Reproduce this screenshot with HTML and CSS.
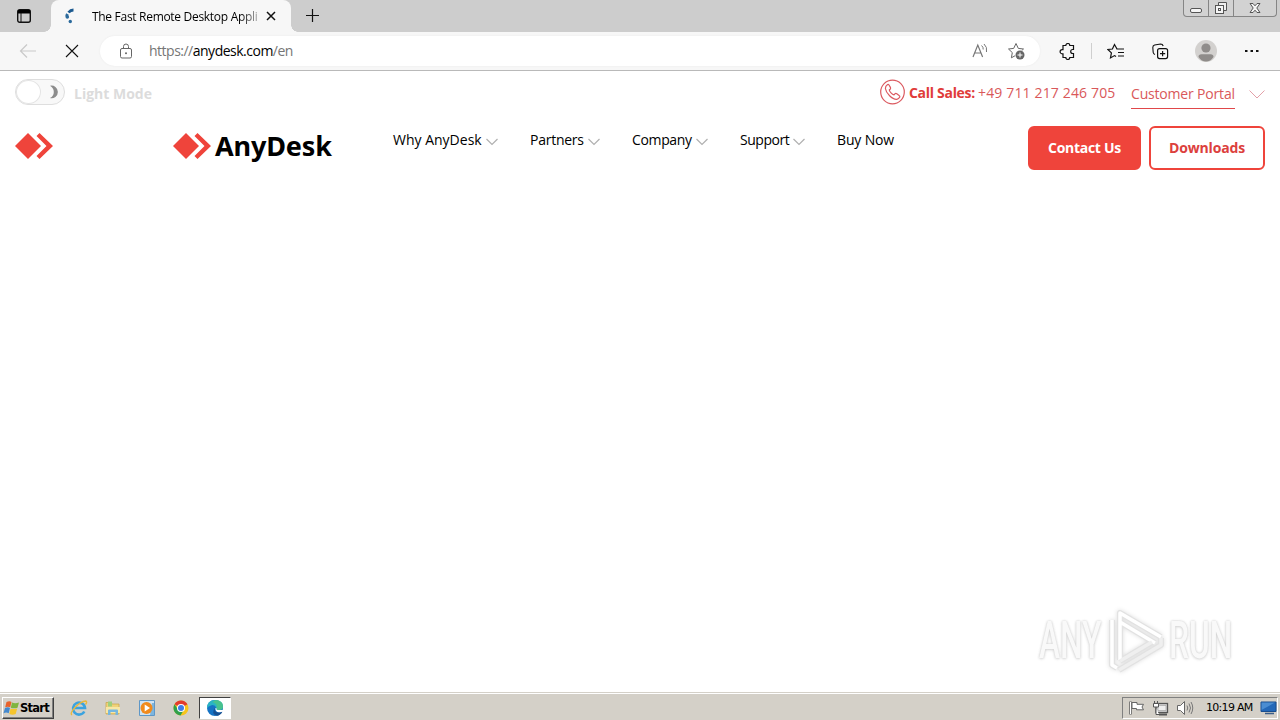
FILE: index.html
```
<!DOCTYPE html>
<html lang="en">
<head>
   <meta charset="UTF-8">
   <meta name="viewport" content="width=device-width, initial-scale=1.0">
   <title>The Fast Remote Desktop Application</title>
   <link rel="stylesheet" href="styles.css">
</head>
<body>

   <!-- shared shapes -->
   <svg class="defs" width="0" height="0">
      <symbol id="mark" viewBox="0 0 38 26">
         <path d="M0 13 13 0 26 13 13 26z"/>
         <path d="M21.500 3 24.500 0 38 13 24.500 26 21.500 23 31.500 13z"/>
      </symbol>
      <symbol id="chevron" viewBox="0 0 12 8">
         <path d="M.5 1 6 6.500 11.500 1" fill="none" stroke="currentColor" stroke-width="1.200"/>
      </symbol>
   </svg>

   <div class="tabstrip">
      <svg class="tab-menu" width="16" height="16" viewBox="0 0 16 16"><rect x="1.700" y="1.700" width="12.600" height="12.600" rx="2" fill="none" stroke="#111" stroke-width="1.400"/><path d="M2 2h12v3.500H2z"/><path d="M5 5v9" stroke="#111"/></svg>
      <div class="tab">
         <svg width="16" height="16" viewBox="0 0 16 16"><path d="M2.800 8.500Q2.800 7 3.500 6" fill="none" stroke="#2b6a9c" stroke-width="3"/><path d="M4.500 4.500Q6.500 2 9.500 2" fill="none" stroke="#1c5a90" stroke-width="2.800"/><circle cx="3.300" cy="9" r="1.800" fill="#2b6a9c"/><circle cx="6.300" cy="13.500" r="1.700" fill="#2b6a9c"/></svg>
         <span class="tab-title">The Fast Remote Desktop Appli</span>
         <svg class="tab-close" width="10" height="10" viewBox="0 0 10 10"><path d="M1 1l8 8M9 1 1 9" stroke="#111" stroke-width="1.500"/></svg>
      </div>
      <svg class="tab-new" width="15" height="15" viewBox="0 0 15 15"><path d="M7.500 1v13M1 7.500h13" stroke="#111" stroke-width="1.200"/></svg>
      <div class="window-buttons">
         <span><svg width="14" height="14" viewBox="0 0 14 14"><rect x="1.500" y="7.500" width="11" height="4" rx="1.500" fill="#f5f5f5" stroke="#555"/></svg></span>
         <span><svg width="14" height="14" viewBox="0 0 14 14"><path d="M4.500 1.500h8v8h-8z" fill="#eee" stroke="#555"/><rect x="1.500" y="4.500" width="8" height="8" fill="#f5f5f5" stroke="#555"/><rect x="4.500" y="7.500" width="2" height="2" fill="none" stroke="#555"/></svg></span>
         <span class="wide"><svg width="14" height="14" viewBox="0 0 14 14"><path d="M2 2.500h3l2 2.300 2-2.300h3L8.800 7l3.200 4.500H9L7 9.200l-2 2.300H2L5.200 7z" fill="#f5f5f5" stroke="#555"/></svg></span>
      </div>
   </div>

   <div class="toolbar">
      <svg class="back" width="18" height="16" viewBox="0 0 18 16"><path d="M8 1.500 1.500 8 8 14.500M1.500 8H17" fill="none" stroke="#c9c9c9" stroke-width="1.200"/></svg>
      <svg class="stop" width="14" height="14" viewBox="0 0 14 14"><path d="M1 1l12 12M13 1 1 13" stroke="#111" stroke-width="1.100"/></svg>
      <div class="address">
         <svg width="14" height="16" viewBox="0 0 14 16"><rect x="1.500" y="5.500" width="11" height="9.500" rx="1.500" fill="none" stroke="#666"/><path d="M4.500 5.500V3.500a2.500 2.500 0 0 1 5 0v2" fill="none" stroke="#666"/><circle cx="7" cy="10.200" r="1" fill="#666"/></svg>
         <span class="url">https://<b>anydesk.com</b>/en</span>
         <svg class="read-aloud" width="17" height="16" viewBox="0 0 17 16"><path d="M1 14 5.800 2l4.800 12M2.800 10h6" fill="none" stroke="#777" stroke-width="1.200"/><path d="M9.500 2.500q2 1.500 1.700 4M12 1q3.500 3 2.500 8" fill="none" stroke="#777"/></svg>
         <svg width="18" height="18" viewBox="0 0 18 18"><path d="M9 1.500l2.300 4.900 5.200.6-3.800 3.600.9 5.200L9 13.200l-4.600 2.600.9-5.200L1.500 7l5.200-.6z" fill="none" stroke="#666"/><circle cx="13" cy="13" r="5" fill="#fff"/><circle cx="13" cy="13" r="4.500" fill="#666"/><path d="M13 10.500v5M10.500 13h5" stroke="#fff"/></svg>
      </div>
      <svg class="extensions" width="17" height="17" viewBox="0 0 17 17"><path d="M4 2.500h2.800a2 2 0 0 1 4 0H14.500V6.500h-.8a2 2 0 0 0 0 4h.8V14.500h-3.700a2 2 0 0 1-4 0H4V10.800H3.200a2.100 2.100 0 0 1 0-4.200H4z" fill="none" stroke="#111" stroke-width="1.200"/></svg>
      <i class="divider"></i>
      <svg class="favorites" width="18" height="17" viewBox="0 0 18 17"><path d="M10 6 7.500 1.500 5.400 6 .9 6.500l3.500 3.400-.9 5 4-2.300 1.500 1" fill="none" stroke="#111" stroke-width="1.200"/><path d="M9.500 6h7.500M11 9.500h6M11 13h6" stroke="#111" stroke-width="1.200"/></svg>
      <svg class="collections" width="17" height="17" viewBox="0 0 17 17"><rect x="5.600" y="5.600" width="10" height="10" rx="2" fill="none" stroke="#111" stroke-width="1.200"/><path d="M10.600 8v5.200M8 10.600h5.200" stroke="#111" stroke-width="1.200"/><path d="M3 11.500q-1.500-.5-1.800-2L.8 4.500q0-2 1.800-2.500l6-1q2 0 2.600 2" fill="none" stroke="#111" stroke-width="1.100"/></svg>
      <svg class="avatar" width="22" height="22" viewBox="0 0 22 22"><circle cx="11" cy="11" r="11" fill="#d3d1cf"/><circle cx="11" cy="8" r="4.600" fill="#8f8c8a"/><path d="M3.500 17q0-2.800 3-2.800h9q3 0 3 2.800-3 4.500-7.500 4.500T3.500 17z" fill="#8f8c8a"/></svg>
      <svg width="14" height="4" viewBox="0 0 14 4"><path d="M0 1h2.500v2H0zM5.500 1H8v2H5.500zM11 1h2.500v2H11z" fill="#111"/></svg>
   </div>

   <div class="page">
      <div class="top-line">
         <div class="switch">
            <i></i>
            <svg width="10" height="14" viewBox="0 0 10 14"><path d="M1 .8A6.300 6.300 0 1 1 1 13Q4.800 11 4.800 7T1 .8z" fill="#8c8c8c"/></svg>
         </div>
         <span class="mode">Light Mode</span>
         <div class="contacts">
            <svg width="25" height="26" viewBox="0 0 25 26"><circle cx="12.500" cy="13" r="11.800" fill="none" stroke="#db5a60" stroke-width="1.200"/><path d="M7.600 5.600Q5.300 7 5.400 9.500q.4 3.500 4.200 7.200 4 3.900 7.200 3.600 2-.2 3-2.200.3-1-.7-1.700l-2.300-1.700q-1.200-.7-2 .3l-.8.8q-1.400-.3-3-2-1.500-1.500-1.700-2.800l1-1q.6-.7.1-1.600L9 6q-.6-.8-1.400-.4z" fill="none" stroke="#db5a60" stroke-width="1.200"/></svg>
            <b>Call Sales:</b>
            <span class="phone">+49 711 217 246 705</span>
            <a class="portal">Customer Portal</a>
            <svg class="portal-arrow" width="16" height="9" viewBox="0 0 16 9"><path d="M.5.500 8 8 15.500.5" fill="none" stroke="#e3a0a8"/></svg>
         </div>
      </div>

      <div class="header">
         <svg class="mark"><use href="#mark"/></svg>
         <div class="logo">
            <svg class="mark"><use href="#mark"/></svg>
            <span>AnyDesk</span>
         </div>
         <nav class="menu">
            <a class="why"><span>Why AnyDesk</span><svg><use href="#chevron"/></svg></a>
            <a class="partners"><span>Partners</span><svg><use href="#chevron"/></svg></a>
            <a class="company"><span>Company</span><svg><use href="#chevron"/></svg></a>
            <a class="support"><span>Support</span><svg><use href="#chevron"/></svg></a>
            <a class="buy"><span>Buy Now</span></a>
         </nav>
         <a class="btn btn-full"><span>Contact Us</span></a>
         <a class="btn btn-line"><span>Downloads</span></a>
      </div>

      <!-- watermark -->
      <div class="watermark">
         <span class="any">ANY</span>
         <svg width="58" height="64" viewBox="0 0 58 64" fill="none" stroke-linejoin="round">
            <path d="M13 51V4l41 24M5 11v45l5 3M13 13l35 21M12 61l42-25v-7M13 52l32-19" stroke="#e2e2e2" stroke-width="6"/>
            <path d="M13 51V4l41 24M5 11v45l5 3M13 13l35 21" stroke="#fff" stroke-width="3.500"/>
            <path d="M12 61l42-25v-7M13 52l32-19" stroke="#efefef" stroke-width="3.500"/>
         </svg>
         <span class="run">RUN</span>
      </div>
   </div>

   <div class="taskbar">
      <div class="start">
         <svg width="17" height="16" viewBox="0 0 17 16"><path d="M3.500 2q3-1.500 5 0L7.200 7.300q-2.300-1.200-5 0z" fill="#e8622c"/><path d="M9 2.500q3 1.500 7 0L14.500 7.700q-3.300 1.300-6.700 0z" fill="#7fb541"/><path d="M2 8q3-1.300 5 0l-1.300 5.200q-2.500-1.200-5.200 0z" fill="#4489cf"/><path d="M7.600 8.500q3 1.200 6.600 0L12.700 14q-3 1.400-6.400 0z" fill="#f6c52e"/></svg>
         <span>Start</span>
      </div>
      <div class="apps">
         <svg width="18" height="18" viewBox="0 0 18 18"><path d="M14.300 12.500A6 6 0 1 1 15 9H5" fill="none" stroke="#3ba3df" stroke-width="2.600"/><path d="M2 16Q-.5 14.500 5 8.500T16 2q1.500 1-.5 3.500" fill="none" stroke="#e9b83a" stroke-width="1.300"/></svg>
         <svg width="18" height="18" viewBox="0 0 18 18"><path d="M2 3.500h5l1 1.500h7v10H2z" fill="#efd27a" stroke="#c8a546" stroke-width=".7"/><path d="M4 2.500h4v5H4z" fill="#9fcf7c"/><path d="M2 8h14v6H2z" fill="#f8e7a5"/><path d="M4 16v-4.500q0-1 1-1h8q1 0 1 1V16h-2.500v-3h-5v3z" fill="#76b7df"/></svg>
         <svg width="18" height="18" viewBox="0 0 18 18"><path d="M1.500 1.500h15v15h-15z" fill="#cfe3f3" stroke="#5e97c7"/><path d="M14 4h2v12h-4z" fill="#7db5de"/><circle cx="8.500" cy="9" r="6" fill="#f18a1c"/><path d="M6.700 5.500v7l5.300-3.500z" fill="#fff"/></svg>
         <svg width="18" height="18" viewBox="0 0 18 18"><circle cx="9" cy="9" r="7.500" fill="#f6c51d"/><path d="M9 9 2.500 5.200A7.500 7.500 0 0 1 15.500 5.300z" fill="#e23b2e"/><path d="M9 9H5L2.500 5.200A7.500 7.500 0 0 0 8.500 16.500l3-5z" fill="#2fa04c"/><circle cx="9" cy="9" r="4" fill="#fff"/><circle cx="9" cy="9" r="3" fill="#3f7de8"/></svg>
         <div class="app-active">
            <svg width="18" height="18" viewBox="0 0 18 18"><circle cx="9" cy="9" r="8" fill="#1673c4"/><path d="M1 9.500Q1 1 9 1q8 .3 8 6.500 0 3.500-4 3.500-3.500 0-2.500-2Q9 5.500 5.500 6.200 2 7 1 9.500z" fill="#2ab4c4"/><path d="M9.500 1Q17 1.500 17 7.500 17 11 13 11q-3.500 0-2.500-2 1.500-4-4-6z" fill="#55c878" opacity=".7"/><path d="M9 8.500q-1.500 5 4 5 2 0 3.400-.7-1.800 3.700-5.500 4Q4.500 15 9 8.500z" fill="#174f91"/><path d="M10.500 9q-1 2 2.500 2h4v1.500q-2 1-4 .8Q9 13 9.500 9z" fill="#fff"/></svg>
         </div>
      </div>
      <div class="tray">
         <svg width="17" height="16" viewBox="0 0 17 16"><path d="M2.500 1.500v13" stroke="#666" stroke-width="2.600"/><path d="M2.500 2v12" stroke="#fff"/><path d="M4 2.500h5v1.800h6.500L14 7l1.500 2.800H8.500V8.500H4z" fill="#fff" stroke="#666"/></svg>
         <svg width="17" height="16" viewBox="0 0 17 16"><rect x="4" y="3.500" width="11.500" height="9" fill="#d9d9d9" stroke="#555" stroke-width="1.300"/><path d="M6 5.500h8v5H6z" fill="#eee" stroke="#999" stroke-width=".6"/><path d="M7 14.500h8" stroke="#555" stroke-width="2"/><path d="M2.500 1v3M5.500 1v3M1.500 3.500h5V7h-5zM4 7.500v7h3" fill="#fff" stroke="#555"/></svg>
         <svg width="18" height="16" viewBox="0 0 18 16"><path d="M1.500 5.500h3l4-4v13l-4-4h-3z" fill="#fff" stroke="#666"/><path d="M11 5.500q1.500 2.500 0 5M13 3.500q3 4.500 0 9M15 2q3.500 6 0 12" fill="none" stroke="#777"/></svg>
         <span class="clock">10:19 AM</span>
         <svg class="desktop" width="17" height="14" viewBox="0 0 17 14"><path d="M1 1h15v9.500H1z" fill="#2468b8" stroke="#184d8e"/><path d="M1.500 1.500H15L1.500 9z" fill="#66a6e3" opacity=".6"/><path d="M5 12.500h9" stroke="#3b5e88" stroke-width="1.500"/></svg>
      </div>
   </div>

</body>
</html>
```
FILE: styles.css
```
* {
   box-sizing: border-box;
}

body {
   margin: 0;
   width: 1280px;
   height: 720px;
   overflow: hidden;
   display: flex;
   flex-direction: column;
   background: #fff;
   font-family: "Open Sans", "Noto Sans", sans-serif;
   color: #000;
}

svg {
   display: block;
   flex: none;
}

span, a, b {
   white-space: nowrap;
}

.defs {
   position: absolute;
}

/* browser */
.tabstrip {
   height: 32px;
   flex: none;
   display: flex;
   background: #cdcdcd;
}

.tab-menu {
   margin: 8px 0 0 16px;
}

.tab {
   width: 240px;
   height: 32px;
   margin-left: 19px;
   padding: 0 15px 0 13px;
   display: flex;
   align-items: center;
   position: relative;
   background: #f7f7f7;
   border-radius: 8px 8px 0 0;
}

.tab::before, .tab::after {
   content: "";
   position: absolute;
   bottom: 0;
   width: 7px;
   height: 7px;
}

.tab::before {
   left: -7px;
   background: radial-gradient(circle at 0 0, transparent 6.5px, #f7f7f7 7px);
}

.tab::after {
   right: -7px;
   background: radial-gradient(circle at 100% 0, transparent 6.5px, #f7f7f7 7px);
}

.tab-title {
   width: 166px;
   margin-left: 12px;
   overflow: hidden;
   font-size: 12px;
   letter-spacing: -0.3px;
   background: linear-gradient(90deg, #000 148px, #aaa 166px);
   -webkit-background-clip: text;
   background-clip: text;
   color: transparent;
}

.tab-close {
   margin-left: auto;
}

.tab-new {
   margin: 8px 0 0 14px;
}

.window-buttons {
   height: 17px;
   margin: 0 3px 0 auto;
   display: flex;
   border: 1px solid #858585;
   border-top: 0;
   border-radius: 0 0 4px 4px;
   background: #d2d2d2;
}

.window-buttons span {
   width: 25px;
   display: flex;
   justify-content: center;
   padding-top: 1px;
   border-right: 1px solid #858585;
}

.window-buttons .wide {
   width: 42px;
   border-right: 0;
}

.toolbar {
   height: 39px;
   flex: none;
   display: flex;
   align-items: center;
   padding-left: 19px;
   background: #f7f7f7;
   border-bottom: 1px solid #b9b9b9;
}

.stop {
   margin-left: 28px;
}

.address {
   width: 940px;
   height: 30px;
   margin-left: 21px;
   padding: 0 15px 0 19px;
   display: flex;
   align-items: center;
   background: #fff;
   border-radius: 15px;
   box-shadow: 0 0 2px #e8e8e8;
}

.url {
   margin: -1px 0 0 16px;
   font-size: 14px;
   letter-spacing: -0.5px;
   color: #767676;
}

.url b {
   font-weight: 400;
   color: #000;
}

.read-aloud {
   margin: 0 18px 0 auto;
}

.extensions {
   margin-left: 19px;
}

.divider {
   width: 1px;
   height: 16px;
   margin-left: 15px;
   background: #cfcfcf;
}

.favorites {
   margin-left: 15px;
}

.collections {
   margin-left: 27px;
}

.avatar {
   margin: 0 28px 0 26px;
}

/* site */
.page {
   flex: 1;
   position: relative;
}

.top-line {
   height: 42px;
   display: flex;
   align-items: center;
   padding: 0 15px;
}

.switch {
   width: 50px;
   height: 26px;
   display: flex;
   align-items: center;
   justify-content: space-between;
   padding-right: 5px;
   border: 1px solid #dedede;
   border-radius: 13px;
   background: #f8f8f8;
}

.switch i {
   width: 25px;
   height: 24px;
   border: 1px solid #e4e4e4;
   border-radius: 50%;
   background: #fff;
}

.mode {
   margin: 2px 0 0 9px;
   font-size: 14px;
   font-weight: 700;
   color: #dcdcdc;
}

.contacts {
   display: flex;
   align-items: center;
   margin-left: auto;
   font-size: 14px;
   color: #d9585a;
}

.contacts b {
   width: 66px;
   margin: 1px 0 0 4px;
   letter-spacing: -0.3px;
   color: #e03c3a;
}

.phone {
   width: 137px;
   margin: 1px 0 0 3px;
   letter-spacing: 0.15px;
}

.portal {
   width: 104px;
   height: 32px;
   margin: 1px 0 0 16px;
   padding-top: 7px;
   line-height: 19px;
   letter-spacing: -0.18px;
   border-bottom: 1px solid #e0474a;
}

.portal-arrow {
   margin: 5px 0 0 14px;
}

.header {
   display: flex;
   align-items: flex-start;
   padding: 13px 15px 0;
}

.mark {
   width: 38px;
   height: 26px;
   margin-top: 7px;
   fill: #ef443b;
}

.logo {
   width: 159px;
   margin-left: 120px;
   display: flex;
}

.logo span {
   margin-left: 4px;
   font-family: "Noto Sans", sans-serif;
   font-size: 27px;
   font-weight: 700;
   line-height: 40px;
   letter-spacing: -0.15px;
}

.menu {
   display: flex;
   margin-left: 61px;
   font-size: 14px;
   line-height: 28px;
}

.menu a {
   display: flex;
   margin-right: 32px;
}

.menu svg {
   width: 12px;
   height: 8px;
   margin: 12px 0 0 3px;
   color: #b0b0b0;
}

.why span { width: 90px; }

.partners span {
   width: 55px;
   letter-spacing: -0.25px;
}

.company span {
   width: 61px;
   letter-spacing: -0.35px;
}

.support span {
   width: 50px;
   letter-spacing: -0.45px;
}

.buy span {
   width: 58px;
   letter-spacing: -0.15px;
}

.btn {
   height: 44px;
   display: flex;
   align-items: center;
   justify-content: center;
   border: 2px solid #ef443b;
   border-radius: 6px;
   font-size: 14px;
   font-weight: 700;
   letter-spacing: -0.3px;
}

.btn-full {
   width: 113px;
   margin-left: auto;
   background: #ef443b;
   color: #fff;
}

.btn-line {
   width: 116px;
   margin-left: 8px;
   letter-spacing: -0.15px;
   color: #dc403d;
}

.btn span {
   margin-top: -1px;
}

.watermark {
   position: absolute;
   right: 47px;
   bottom: 19px;
   display: flex;
   align-items: center;
   gap: 4px;
   color: #f9f9f9;
   font-family: Roboto, sans-serif;
   font-size: 52px;
   font-weight: 500;
   line-height: 64px;
   text-shadow: 0 0 3px #ccc, 0 1px 4px #ddd;
}

.watermark svg {
   filter: drop-shadow(0 0 2px #ddd);
}

.watermark span {
   width: 64px;
   transform: scaleX(0.61);
   transform-origin: 0 50%;
}

/* taskbar */
.taskbar {
   height: 28px;
   flex: none;
   display: flex;
   align-items: center;
   padding: 3px 2px 1px;
   background: #d4d0c8;
   border-top: 1px solid #d4d0c8;
   box-shadow: inset 0 1px #fff;
   font-family: "DejaVu Sans", sans-serif;
   font-size: 11px;
}

.start {
   width: 52px;
   height: 22px;
   display: flex;
   align-items: center;
   border: 1px solid;
   border-color: #fff #404040 #404040 #fff;
   box-shadow: inset -1px -1px #808080;
   font-weight: 700;
}

.start span {
   font-size: 11.5px;
   letter-spacing: -0.75px;
}

.apps {
   display: flex;
   align-items: center;
   gap: 16px;
   margin-left: 16px;
}

.app-active {
   width: 32px;
   height: 22px;
   display: flex;
   align-items: center;
   justify-content: center;
   margin-left: -7px;
   border: 1px solid;
   border-color: #404040 #fff #fff #404040;
   background: #fff;
}

.tray {
   width: 156px;
   height: 22px;
   display: flex;
   align-items: center;
   gap: 7px;
   margin-left: auto;
   padding-left: 5px;
   border: 1px solid;
   border-color: #808080 #fff #fff #808080;
}

.clock {
   width: 47px;
   margin-left: 5px;
   letter-spacing: -0.7px;
}
```
